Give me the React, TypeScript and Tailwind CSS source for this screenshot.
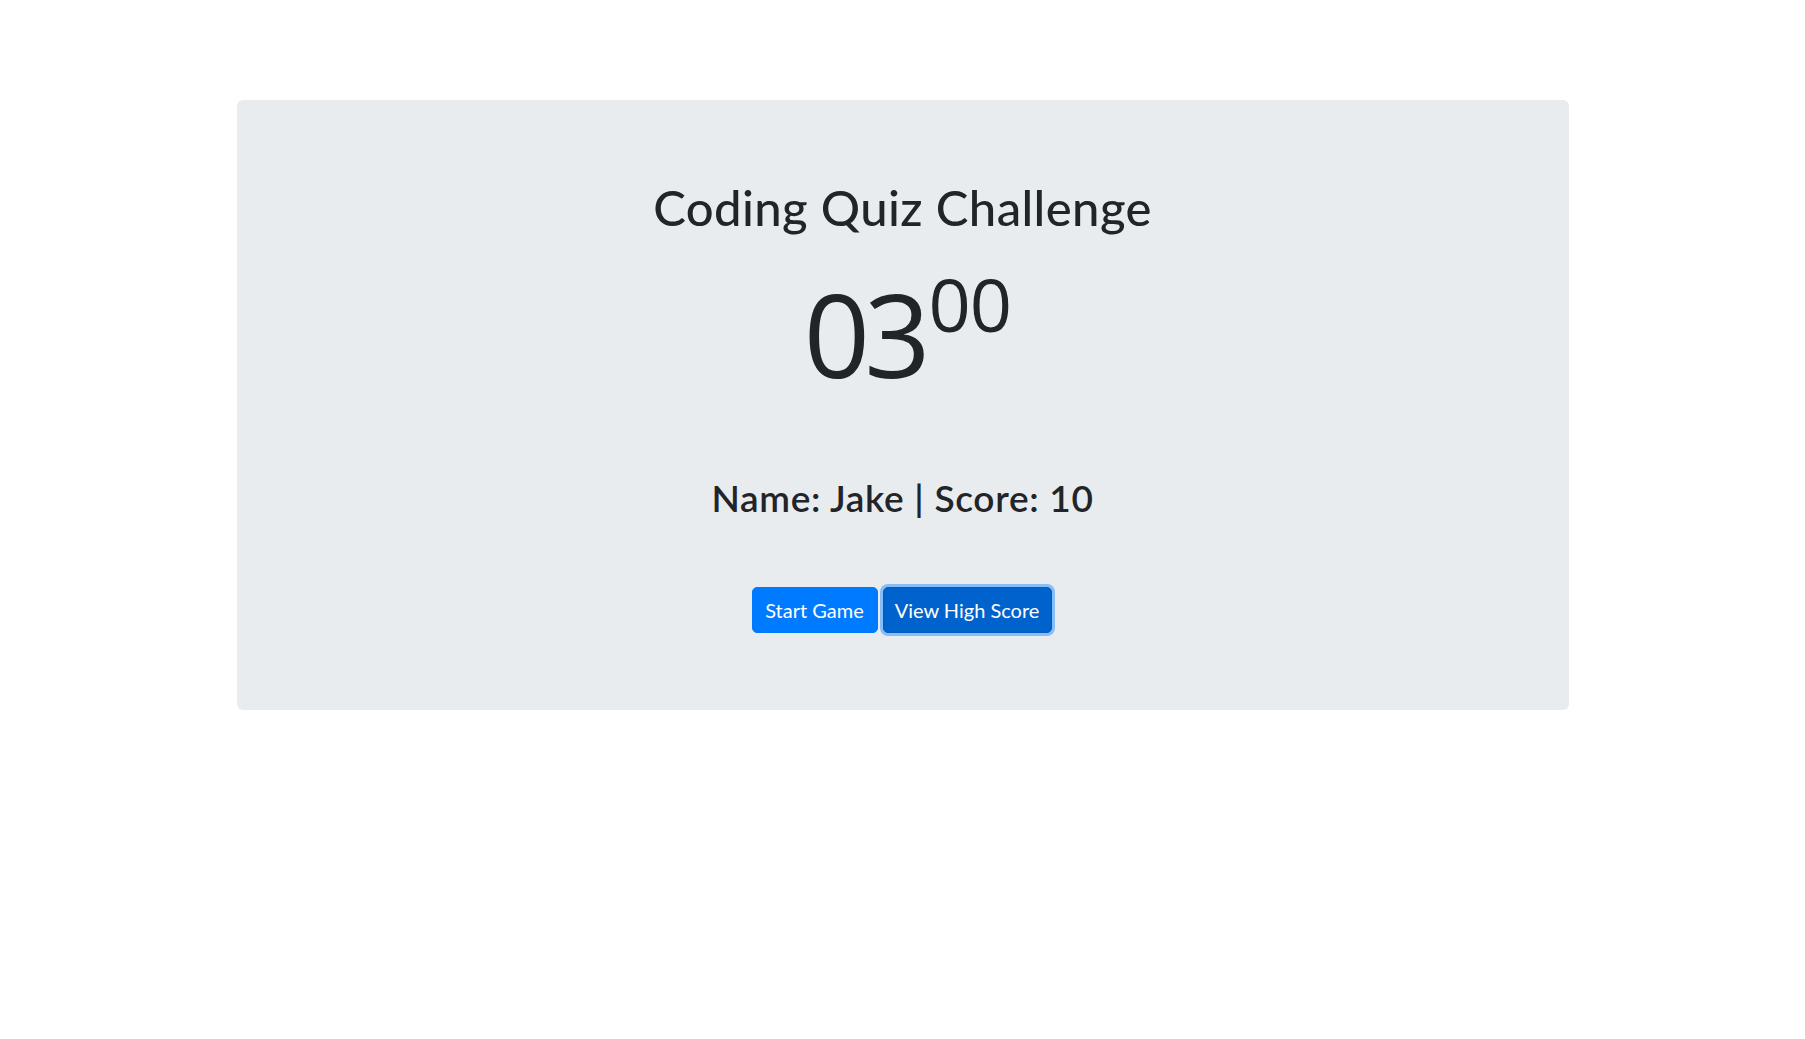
import React from "react";

const App = () => {
  return (
    <div className="min-h-[1039px] bg-white text-[#212529] font-['Lato',sans-serif] pt-[100px]">
      {/* Jumbotron */}
      <section className="mx-auto w-[1332px] h-[610px] rounded-[6px] bg-[#e9ecef] pt-[77px] flex flex-col items-center">
        {/* Title */}
        <h1 className="text-[49px] leading-[60px] font-medium tracking-[0.4px]">Coding Quiz Challenge</h1>

        {/* Timer */}
        <div className="mt-[30px] flex items-start justify-center pl-[10px] font-['Open_Sans',sans-serif] font-normal">
          <span className="mt-[8px] text-[116px] leading-none tracking-[-6px]">03</span>
          <span className="ml-[4px] text-[74px] leading-none tracking-[-1px]">00</span>
        </div>

        {/* Player line */}
        <h3 className="mt-[85px] text-[37px] leading-[44px] font-semibold tracking-[0.7px]">Name: Jake | Score: 10</h3>

        {/* Buttons */}
        <div className="mt-[67px] flex gap-[5px] pr-[2px]">
          <button className="w-[126px] h-[46px] flex items-center justify-center rounded-[5px] border border-[#007bff] bg-[#007bff] text-white text-[20px]">
            Start Game
          </button>
          <button className="w-[169px] h-[46px] flex items-center justify-center rounded-[5px] border border-[#005cbf] bg-[#0062cc] text-white text-[20px] shadow-[0_0_0_3px_rgba(38,143,255,0.5)]">
            View High Score
          </button>
        </div>
      </section>
    </div>
  );
};

export default App;
